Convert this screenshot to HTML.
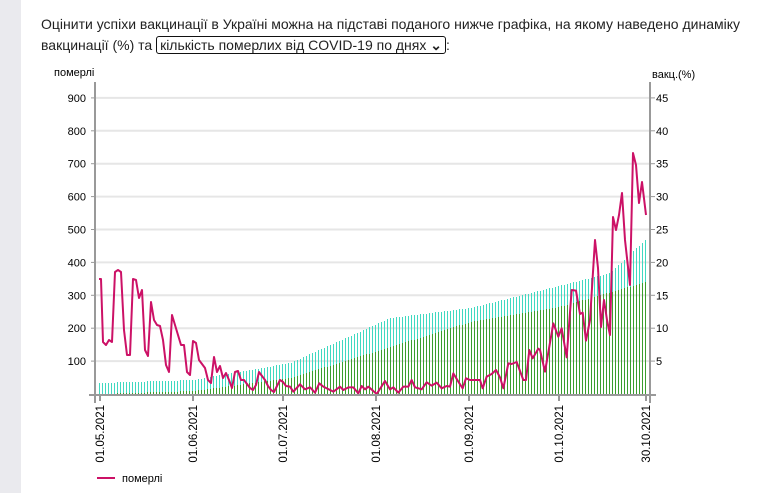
<!DOCTYPE html>
<html><head><meta charset="utf-8"><style>
body{margin:0;width:768px;height:493px;background:#fff;font-family:"Liberation Sans",sans-serif;overflow:hidden;position:relative}
.side{position:absolute;left:0;top:0;width:21px;height:493px;background:#eaeaee}
.t{position:absolute;left:41px;top:14px;font-size:14px;line-height:21px;color:#222}
.sel{display:inline-block;border:1.5px solid #111;border-radius:3px;padding:0 3px;line-height:16px}
svg{position:absolute;left:0;top:0}
</style></head><body>
<div class="side"></div>
<div class="t">Оцінити успіхи вакцинації в Україні можна на підставі поданого нижче графіка, на якому наведено динаміку<br>вакцинації (%) та <span class="sel">кількість померлих від COVID-19 по днях <b>&#8964;</b></span>:</div>
<svg id="s" width="768" height="493" font-family="Liberation Sans, sans-serif" font-size="11"></svg>
<script>
var s=document.getElementById('s'),h='';
var y0=394,k=32.9/100;
for(var i=1;i<=9;i++){var y=y0-i*100*k;h+='<line x1="96" x2="650" y1="'+y+'" y2="'+y+'" stroke="#e6e6e6" stroke-width="2"/>';
h+='<text x="86" y="'+(y+4)+'" text-anchor="end">'+(i*100)+'</text><line x1="91" x2="96" y1="'+y+'" y2="'+y+'" stroke="#999"/>';
h+='<text x="656" y="'+(y+4)+'">'+(i*5)+'</text><line x1="650" x2="655" y1="'+y+'" y2="'+y+'" stroke="#999"/>';}
function lerp(p,x){for(var j=0;j<p.length-1;j++){if(x<=p[j+1][0]){var t=(x-p[j][0])/(p[j+1][0]-p[j][0]);return p[j][1]+t*(p[j+1][1]-p[j][1]);}}return p[p.length-1][1];}
var cy=[[99,383],[193,380],[290,363],[390,318],[470,308],[559,286],[610,273],[646,239]];
var gr=[[99,394],[193,391],[290,378],[390,347],[470,322],[559,307],[646,282]];
for(var d=0;d<183;d++){var x=99+d*3;h+='<rect x="'+x+'" width="1" y="'+Math.round(lerp(cy,x))+'" height="'+(394-Math.round(lerp(cy,x)))+'" fill="#40d9c0"/>';
var g=Math.round(lerp(gr,x));h+='<rect x="'+x+'" width="1" y="'+g+'" height="'+(394-g)+'" fill="#3a9e2e"/>';}
var P=[[99,279],[101,279],[103,342],[106,345],[109,340],[112,342],[115,272],[118,270],[121,272],[124,330],[127,355],[130,355],[133,279],[136,280],[139,298],[142,290],[145,350],[148,356],[151,302],[154,320],[157,325],[160,326],[163,340],[166,365],[169,372],[172,315],[175,325],[178,335],[181,345],[184,345],[187,372],[190,375],[193,341],[196,343],[199,360],[202,364],[205,368],[208,380],[211,383],[214,357],[217,372],[220,366],[223,378],[226,373],[229,380],[232,388],[235,372],[238,371],[241,380],[244,380],[247,384],[250,388],[253,390],[256,385],[259,372],[262,376],[265,380],[268,386],[271,390],[274,392],[277,386],[280,380],[283,382],[286,386]];
var Z=[[0,410],[10,425],[30,403],[45,418],[60,412],[75,428],[88,400],[100,410],[130,425],[150,410],[160,420],[175,412],[190,412],[205,430],[215,408],[225,418],[235,410],[260,432],[285,393],[300,418],[310,412],[325,428],[340,410],[355,410],[365,390],[375,412],[395,418],[410,397],[425,407],[440,398],[455,415],[470,408],[480,410],[490,370],[505,395],[518,415],[528,385],[540,390],[570,390],[578,415],[590,380],[605,372],[618,360],[630,382],[640,415],[655,340],[665,342],[680,336],[700,390],[708,390],[718,300],[728,325],[745,296],[750,300],[765,365],[790,220],[805,260],[815,235],[830,322],[845,120],[858,122],[870,192],[878,188],[888,272],[900,210]];
Z.forEach(function(p){P.push([290+p[0]/3,250+p[1]/3]);});
P=P.concat([[595,240],[598,268],[601,327],[604,300],[607,320],[610,335],[613,217],[616,230],[619,215],[622,193],[625,240],[630,285],[633,153],[636,165],[639,203],[642,182],[646,215]]);
h+='<polyline fill="none" stroke="#cc1166" stroke-width="2" stroke-linejoin="round" points="'+P.map(function(p){return p.join(',')}).join(' ')+'"/>';
h+='<line x1="95" x2="95" y1="82" y2="403" stroke="#999" stroke-width="2"/><line x1="650" x2="650" y1="82" y2="403" stroke="#999" stroke-width="2"/><line x1="89" x2="656" y1="395" y2="395" stroke="#999" stroke-width="2"/>';
var D=[[100,'01.05.2021'],[193,'01.06.2021'],[283,'01.07.2021'],[376,'01.08.2021'],[469,'01.09.2021'],[559,'01.10.2021'],[646,'30.10.2021']];
D.forEach(function(e){h+='<line x1="'+e[0]+'" x2="'+e[0]+'" y1="395" y2="401" stroke="#999" stroke-width="2"/><text transform="translate('+(e[0]+4)+',405) rotate(-90)" text-anchor="end" font-size="11.5">'+e[1]+'</text>';});
h+='<text x="54" y="76">померлі</text><text x="652" y="78">вакц.(%)</text>';
h+='<line x1="97" x2="115" y1="478" y2="478" stroke="#cc1166" stroke-width="2"/><text x="122" y="482">померлі</text>';
s.innerHTML=h;
</script>
</body></html>
